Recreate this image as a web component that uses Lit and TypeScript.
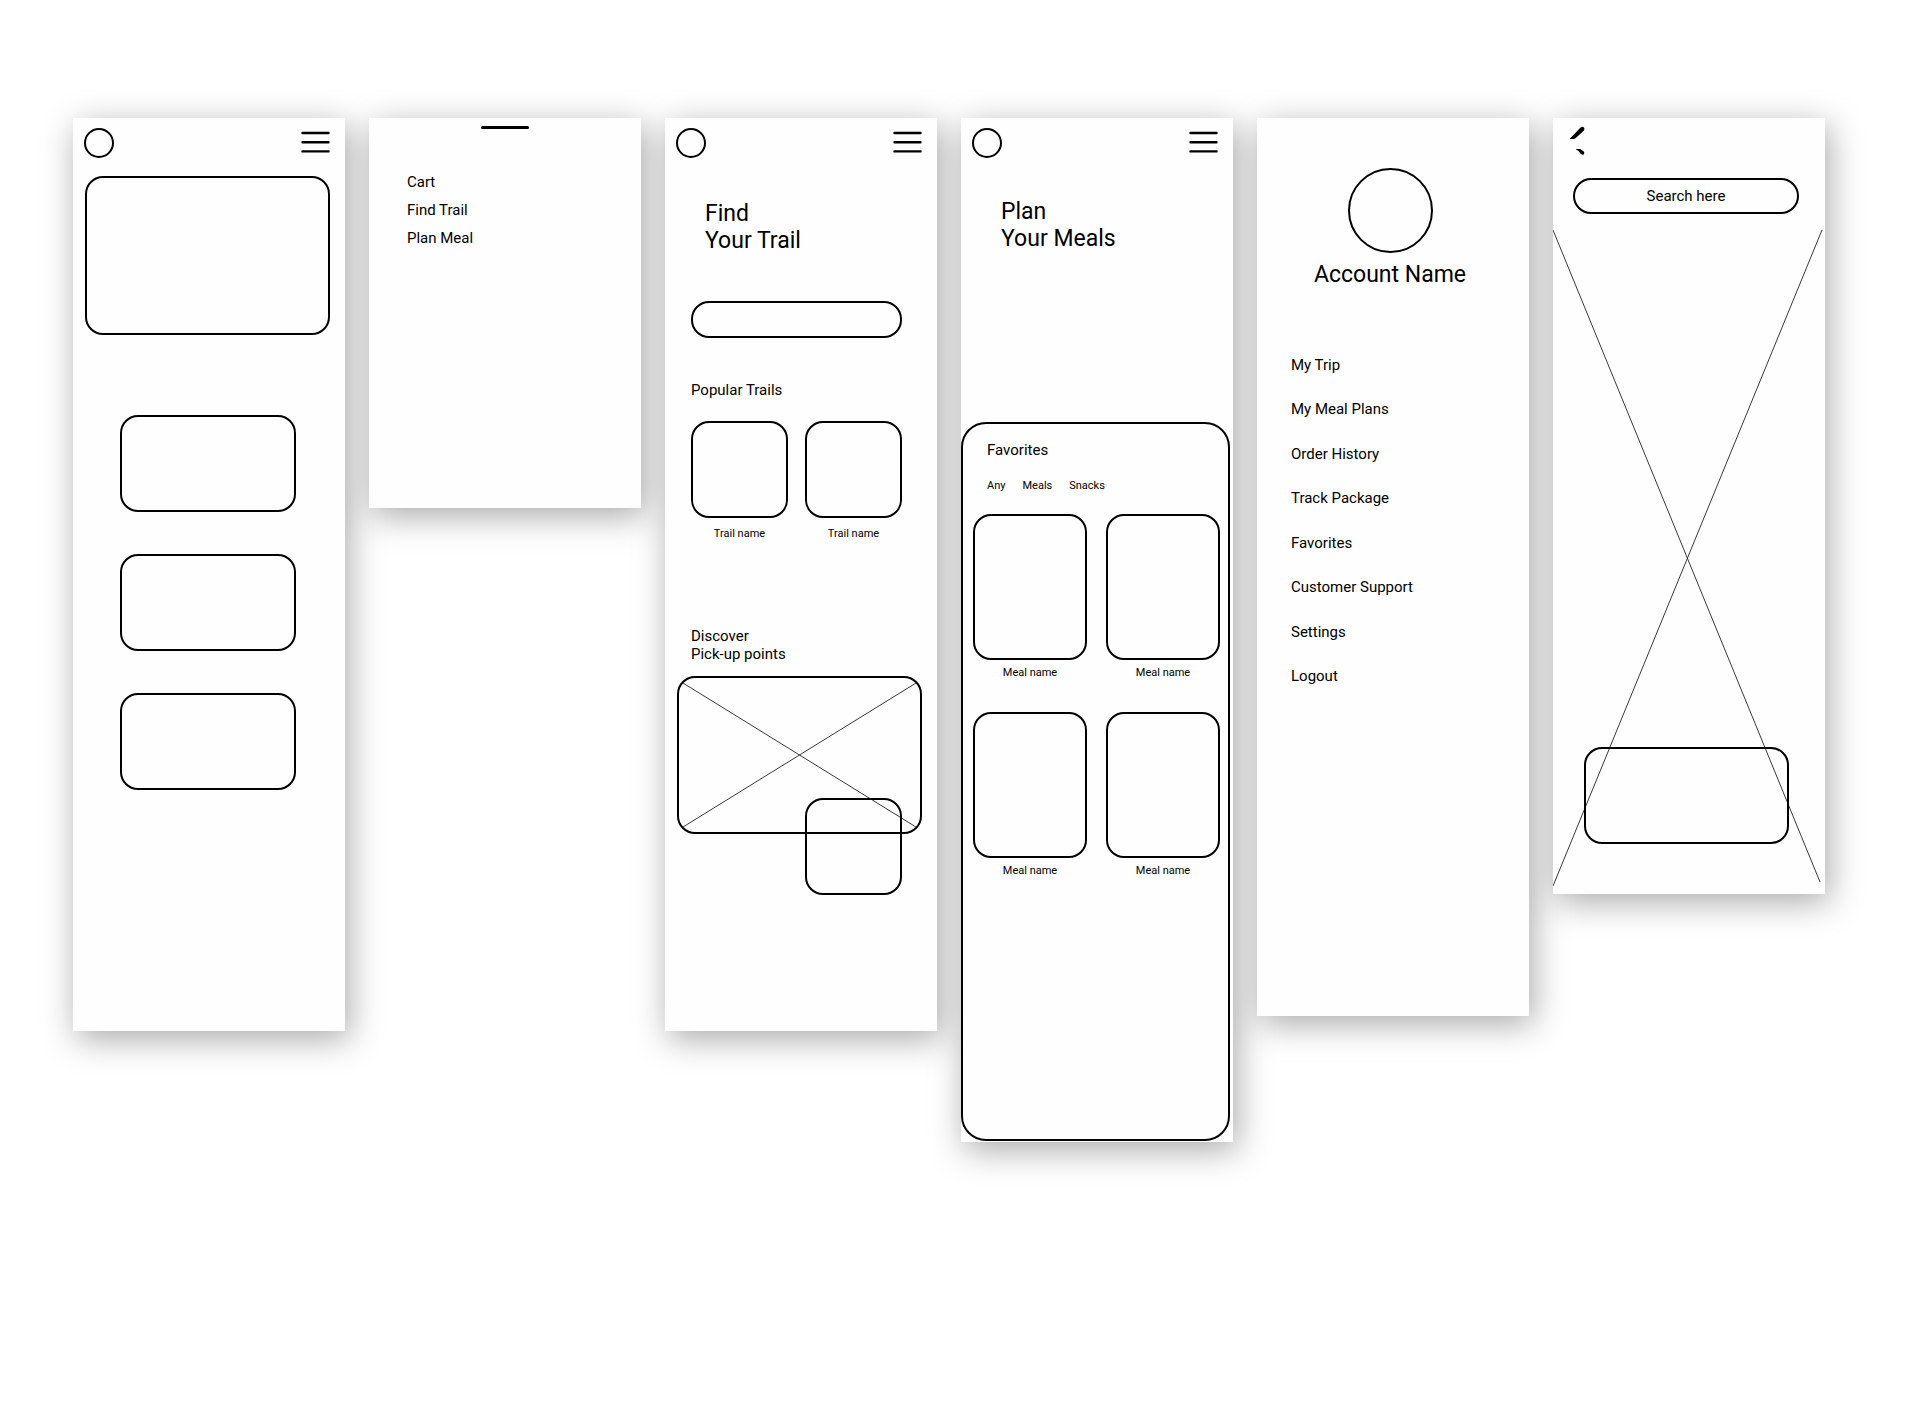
import { LitElement, html, css, svg } from "lit";
import { customElement } from "lit/decorators.js";

const base = css`
  *,
  *::before {
    box-sizing: border-box;
  }
  h2,
  h3,
  p,
  ul {
    margin: 0;
    padding: 0;
    font-size: inherit;
    font-weight: 400;
  }
  ul {
    list-style: none;
  }
  a {
    color: inherit;
    text-decoration: none;
  }
  button,
  input {
    margin: 0;
    padding: 0;
    border: 0;
    background: none;
    color: inherit;
    font: inherit;
  }
  svg {
    display: block;
  }
  .box {
    display: block;
    border: 2px solid #000;
    border-radius: 18px;
  }
  .title {
    font-size: 23px;
    line-height: 27px;
  }
  .small {
    font-size: 11px;
    line-height: 13px;
  }
  .cross {
    width: 100%;
    height: 100%;
    stroke: #222;
    stroke-width: 0.9;
  }
  .cross line {
    vector-effect: non-scaling-stroke;
  }
`;

@customElement("top-bar")
class TopBar extends LitElement {
  static styles = [
    base,
    css`
      :host {
        display: flex;
        justify-content: space-between;
        padding: 10px 15px 0 11px;
      }
      .logo {
        width: 30px;
        height: 30px;
        border: 2px solid #000;
        border-radius: 50%;
      }
      .menu {
        width: 29px;
        height: 30px;
        stroke: #000;
        stroke-width: 2.4;
        stroke-linecap: round;
      }
    `,
  ];
  render() {
    return html`
      <a class="logo" href="#" aria-label="Home"></a>
      <button class="menu" type="button" aria-label="Menu">
        <svg width="29" height="30" viewBox="0 0 29 30">
          <path d="M1.5 5H27.5M1.5 14.3H27.5M1.5 23.4H27.5" />
        </svg>
      </button>
    `;
  }
}

@customElement("home-screen")
class HomeScreen extends LitElement {
  static styles = [
    base,
    css`
      :host {
        display: block;
        padding-bottom: 241px;
      }
      .hero {
        height: 159px;
        margin: 18px 15px 80px 12px;
      }
      .cards {
        display: grid;
        gap: 42px;
        margin: 0 49px 0 47px;
      }
      .cards .box {
        height: 97px;
      }
    `,
  ];
  render() {
    return html`
      <top-bar></top-bar>
      <div class="box hero"></div>
      <div class="cards">
        <div class="box"></div>
        <div class="box"></div>
        <div class="box"></div>
      </div>
    `;
  }
}

@customElement("menu-sheet")
class MenuSheet extends LitElement {
  static styles = [
    base,
    css`
      :host {
        display: block;
        padding: 8px 0 261px;
      }
      .handle {
        display: block;
        width: 48px;
        height: 3px;
        margin: 0 auto 44px;
        border-radius: 2px;
        background: #000;
      }
      .links {
        display: grid;
        gap: 10px;
        padding-left: 38px;
      }
    `,
  ];
  render() {
    return html`
      <button class="handle" type="button" aria-label="Close menu"></button>
      <ul class="links">
        ${["Cart", "Find Trail", "Plan Meal"].map((t) => html`<li><a href="#">${t}</a></li>`)}
      </ul>
    `;
  }
}

@customElement("trail-screen")
class TrailScreen extends LitElement {
  static styles = [
    base,
    css`
      :host {
        display: block;
        padding-bottom: 197px;
      }
      .title {
        padding-left: 40px;
        margin-top: 42px;
      }
      .body {
        display: flex;
        flex-direction: column;
        padding: 47px 35px 13px 26px;
      }
      .search {
        width: 100%;
        height: 37px;
        padding: 0 16px;
      }
      .popular {
        margin-top: 43px;
      }
      .trails {
        display: grid;
        grid-template-columns: 1fr 1fr;
        gap: 17px;
        margin: 22px 0 87px;
        text-align: center;
      }
      .trails .box {
        height: 97px;
        margin-bottom: 9px;
      }
      .map {
        position: relative;
        height: 158px;
        margin: 0 15px 0 12px;
        padding: 5px 4px;
      }
      .pin {
        position: absolute;
        right: 18px;
        bottom: -63px;
        width: 97px;
        height: 97px;
      }
    `,
  ];
  render() {
    return html`
      <top-bar></top-bar>
      <h2 class="title">Find<br />Your Trail</h2>
      <div class="body">
        <input class="box search" type="search" aria-label="Search trails" />
        <h3 class="popular">Popular Trails</h3>
        <ul class="trails">
          ${[1, 2].map(
            () => html`<li class="small"><a href="#"><span class="box"></span>Trail name</a></li>`
          )}
        </ul>
        <p>Discover<br />Pick-up points</p>
      </div>
      <div class="box map">
        <svg class="cross" viewBox="0 0 232 144" preserveAspectRatio="none">
          ${svg`<line x1="0" y1="0" x2="232" y2="144" /><line x1="232" y1="0" x2="0" y2="144" />`}
        </svg>
        <div class="box pin"></div>
      </div>
    `;
  }
}

@customElement("meal-screen")
class MealScreen extends LitElement {
  static styles = [
    base,
    css`
      :host {
        display: block;
        padding-bottom: 1px;
      }
      .title {
        padding-left: 40px;
        margin: 40px 0 170px;
      }
      .sheet {
        margin-right: 3px;
        padding: 17px 8px 262px 10px;
        border-radius: 25px;
      }
      .heading {
        padding-left: 14px;
      }
      .tabs {
        display: flex;
        gap: 17px;
        padding: 20px 0 22px 14px;
      }
      .meals {
        display: grid;
        grid-template-columns: 1fr 1fr;
        gap: 33px 19px;
        text-align: center;
      }
      .meals .box {
        height: 146px;
        margin-bottom: 6px;
      }
    `,
  ];
  render() {
    return html`
      <top-bar></top-bar>
      <h2 class="title">Plan<br />Your Meals</h2>
      <section class="box sheet">
        <h3 class="heading">Favorites</h3>
        <div class="tabs small">
          ${["Any", "Meals", "Snacks"].map((t) => html`<button type="button">${t}</button>`)}
        </div>
        <ul class="meals">
          ${[1, 2, 3, 4].map(
            () => html`<li class="small"><a href="#"><span class="box"></span>Meal name</a></li>`
          )}
        </ul>
      </section>
    `;
  }
}

@customElement("account-screen")
class AccountScreen extends LitElement {
  static styles = [
    base,
    css`
      :host {
        display: block;
        padding: 50px 0 331px;
      }
      .profile {
        display: flex;
        flex-direction: column;
        align-items: center;
        gap: 8px;
        padding-right: 6px;
      }
      .avatar {
        width: 85px;
        height: 85px;
        border: 2px solid #000;
        border-radius: 50%;
      }
      .links {
        display: flex;
        flex-direction: column;
        justify-content: space-between;
        height: 329px;
        margin: 68px 0 0 34px;
      }
    `,
  ];
  items = [
    "My Trip",
    "My Meal Plans",
    "Order History",
    "Track Package",
    "Favorites",
    "Customer Support",
    "Settings",
    "Logout",
  ];
  render() {
    return html`
      <div class="profile">
        <div class="avatar"></div>
        <h2 class="title">Account Name</h2>
      </div>
      <ul class="links">
        ${this.items.map((t) => html`<li><a href="#">${t}</a></li>`)}
      </ul>
    `;
  }
}

@customElement("search-screen")
class SearchScreen extends LitElement {
  static styles = [
    base,
    css`
      :host {
        display: block;
        padding: 7px 0 8px;
      }
      .back {
        display: block;
        margin-left: 15px;
      }
      .field {
        display: flex;
        margin: 22px 26px 16px 20px;
      }
      .field input {
        width: 100%;
        height: 36px;
        text-align: center;
      }
      .field input::placeholder {
        color: #000;
        opacity: 1;
      }
      .map {
        position: relative;
        height: 656px;
      }
      .panel {
        position: absolute;
        left: 31px;
        right: 36px;
        bottom: 42px;
        height: 97px;
      }
    `,
  ];
  render() {
    return html`
      <button class="back" type="button" aria-label="Back">
        <svg width="18" height="31" viewBox="0 0 18 31">
          <path
            d="M1.5 14 L12.6 2.4 Q14.6 0.9 16 2.4 Q17 3.8 15.9 5.4 L7.8 13 Q6.8 13.9 5.4 14 ZM8 24 H12.2 L15.8 26.6 Q17 28.2 15.7 29.4 Q14.4 30.2 13 29 L10.2 25.8 Q9.2 24.6 8 24.4 Z"
          />
        </svg>
      </button>
      <div class="field">
        <input class="box" type="text" aria-label="Search" placeholder="Search here" />
      </div>
      <div class="map">
        <svg class="cross" viewBox="0 0 272 656" preserveAspectRatio="none">
          ${svg`<line x1="0" y1="0" x2="267" y2="652" /><line x1="269" y1="0" x2="0" y2="656" />`}
        </svg>
        <div class="box panel"></div>
      </div>
    `;
  }
}

@customElement("app-root")
class AppRoot extends LitElement {
  static styles = [
    base,
    css`
      :host {
        display: block;
        min-height: 100vh;
        box-sizing: border-box;
        padding: 118px 83px 118px 73px;
        background: #fff;
        color: #000;
        font-family: Roboto, "Liberation Sans", sans-serif;
        font-size: 15px;
        line-height: 18px;
      }
      .board {
        display: grid;
        grid-template-columns: repeat(6, minmax(0, 1fr));
        align-items: start;
        gap: 24px;
        isolation: isolate;
      }
      .screen {
        position: relative;
        background: #fefefe;
      }
      .screen::before {
        content: "";
        position: absolute;
        inset: 0;
        z-index: -1;
        box-shadow: 4px 8px 32px rgba(0, 0, 0, 0.34);
      }
    `,
  ];
  render() {
    return html`
      <main class="board">
        <section class="screen"><home-screen></home-screen></section>
        <section class="screen"><menu-sheet></menu-sheet></section>
        <section class="screen"><trail-screen></trail-screen></section>
        <section class="screen"><meal-screen></meal-screen></section>
        <section class="screen"><account-screen></account-screen></section>
        <section class="screen"><search-screen></search-screen></section>
      </main>
    `;
  }
}
